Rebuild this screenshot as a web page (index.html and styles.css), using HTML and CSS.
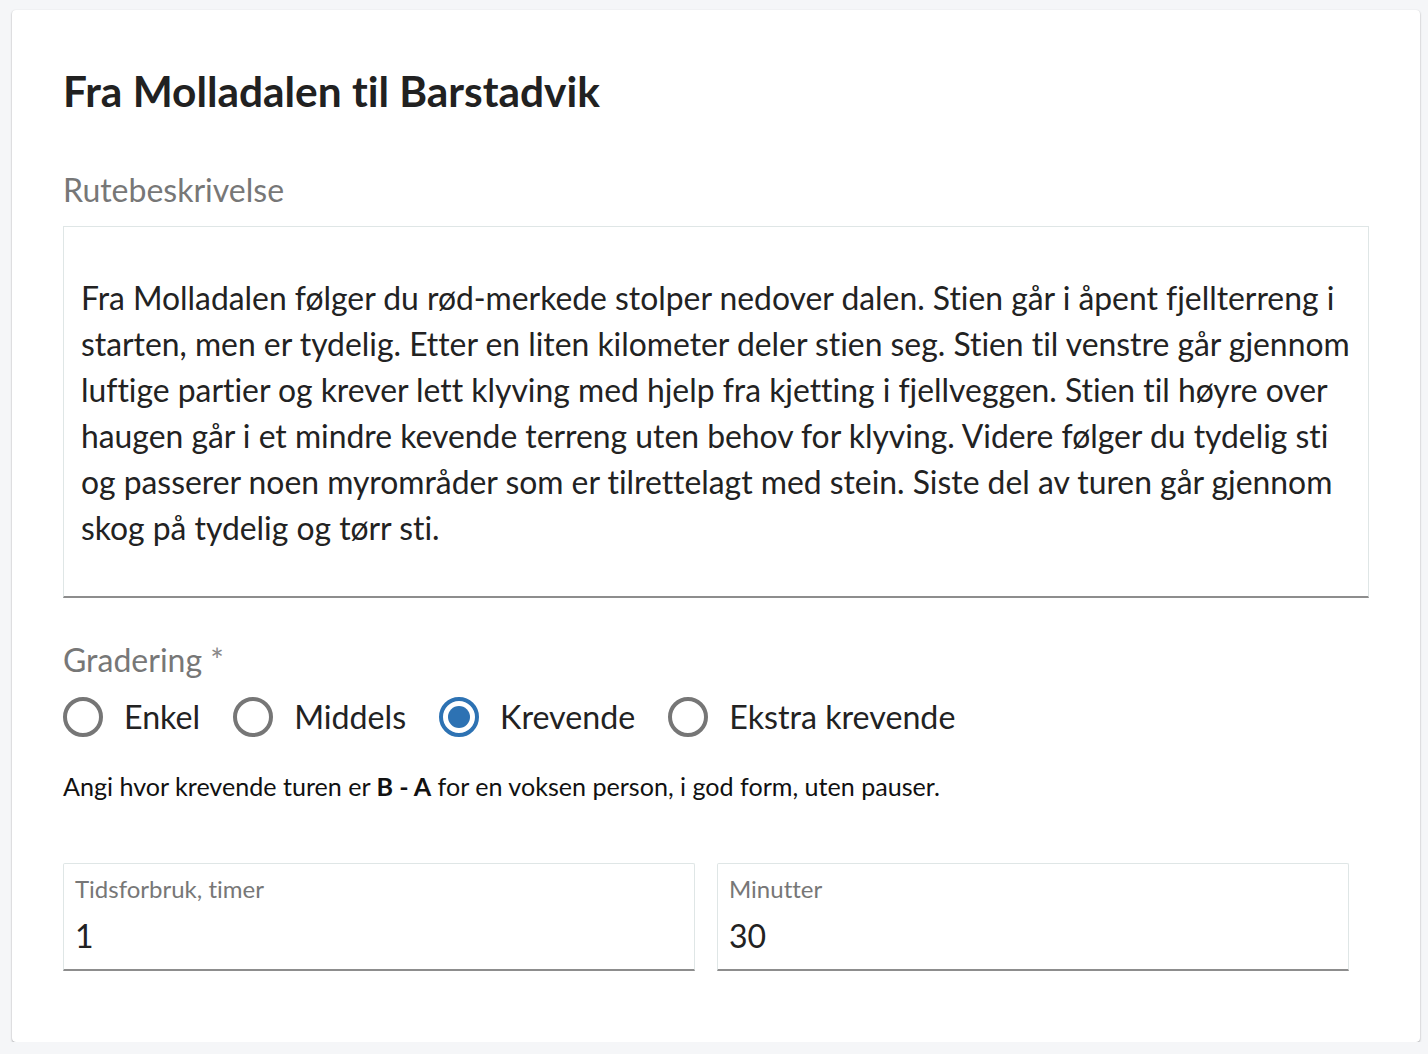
FILE: index.html
```html
<!DOCTYPE html>
<html lang="no">
<head>
<meta charset="utf-8">
<title>Fra Molladalen til Barstadvik</title>
<link rel="stylesheet" href="styles.css">
</head>
<body>
<main class="card">
  <h1 class="title">Fra Molladalen til Barstadvik</h1>

  <div class="field-label">Rutebeskrivelse</div>
  <div class="textarea">Fra Molladalen følger du rød-merkede stolper nedover dalen. Stien går i åpent fjellterreng i starten, men er tydelig. Etter en liten kilometer deler stien seg. Stien til venstre går gjennom luftige partier og krever lett klyving med hjelp fra kjetting i fjellveggen. Stien til høyre over haugen går i et mindre kevende terreng uten behov for klyving. Videre følger du tydelig sti og passerer noen myrområder som er tilrettelagt med stein. Siste del av turen går gjennom skog på tydelig og tørr sti.</div>

  <div class="field-label grade-label">Gradering <span class="req">*</span></div>
  <div class="radios">
    <label class="radio"><span class="circle"></span><span class="radio-text">Enkel</span></label>
    <label class="radio"><span class="circle"></span><span class="radio-text">Middels</span></label>
    <label class="radio"><span class="circle checked"></span><span class="radio-text">Krevende</span></label>
    <label class="radio"><span class="circle"></span><span class="radio-text">Ekstra krevende</span></label>
  </div>
  <p class="help">Angi hvor krevende turen er <b>B - A</b> for en voksen person, i god form, uten pauser.</p>

  <div class="inputs">
    <div class="input">
      <div class="input-label">Tidsforbruk, timer</div>
      <div class="input-value">1</div>
    </div>
    <div class="input">
      <div class="input-label">Minutter</div>
      <div class="input-value">30</div>
    </div>
  </div>
</main>
</body>
</html>
```
FILE: styles.css
```css
* { box-sizing: border-box; }
html, body { margin: 0; padding: 0; }
body {
  background: #f5f6f8;
  font-family: Lato, "Open Sans", sans-serif;
  font-variant-ligatures: none;
  font-feature-settings: "liga" 0, "clig" 0;
  color: #212121;
  padding: 10px 8px 0 12px;
}
.card {
  width: 1408px;
  background: #fff;
  border-radius: 4px;
  box-shadow: 0 1px 2px rgba(0,0,0,0.35), 0 0 1px rgba(0,0,0,0.06);
  padding: 55px 51px 71px 51px;
}
.title {
  margin: 0;
  font-size: 42.4px;
  line-height: 52px;
  font-weight: 700;
  color: #212121;
}
.field-label {
  margin-top: 54px;
  font-size: 32px;
  line-height: 38px;
  color: #777;
}
.textarea {
  margin-top: 17px;
  border: 1px solid #dfe6e6;
  border-bottom: 2px solid #8d8d8d;
  padding: 48px 8px 45px 17px;
  font-size: 31.85px;
  line-height: 46px;
  color: #222;
}
.grade-label { margin-top: 43px; }
.req { color: #888; }
.radios {
  margin-top: 18px;
  display: flex;
  gap: 33px;
  height: 40px;
}
.radio {
  display: flex;
  align-items: center;
  gap: 21px;
}
.circle {
  width: 40px;
  height: 40px;
  border-radius: 50%;
  border: 4px solid #767676;
  flex: none;
  display: flex;
  align-items: center;
  justify-content: center;
}
.circle.checked { border-color: #2d72b3; }
.circle.checked::after {
  content: "";
  width: 22px;
  height: 22px;
  border-radius: 50%;
  background: #2d72b3;
}
.radio-text {
  font-size: 32.2px;
  line-height: 40px;
  color: #222;
}
.help {
  margin: 33px 0 0 0;
  font-size: 25.1px;
  line-height: 32px;
  color: #111;
}
.help b { font-weight: 700; }
.inputs {
  margin-top: 61px;
  padding-right: 20px;
  display: grid;
  grid-template-columns: 1fr 1fr;
  gap: 22px;
}
.input {
  border: 1px solid #dfe6e6;
  border-bottom: 2px solid #8d8d8d;
  border-radius: 2px 2px 0 0;
  padding: 11px 11px 14px 11px;
}
.input-label {
  font-size: 24px;
  line-height: 28px;
  color: #777;
}
.input-value {
  margin-top: 14px;
  font-size: 32px;
  line-height: 38px;
  color: #222;
}
```
